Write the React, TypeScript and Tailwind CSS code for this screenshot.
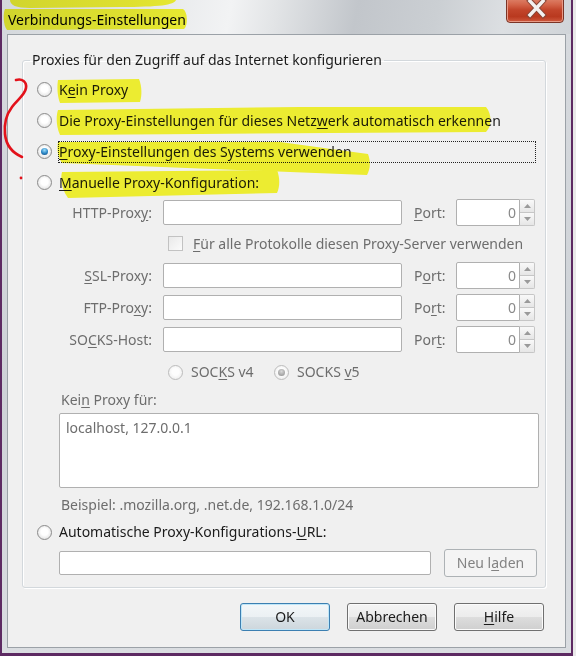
import React from "react";

type Opt = { checked?: boolean; disabled?: boolean };

function Radio({ checked = false, disabled = false }: Opt) {
  return (
    <span
      className={
        disabled
          ? "flex h-[15px] w-[15px] shrink-0 items-center justify-center rounded-full border border-[#bcbcbc] bg-[radial-gradient(circle_at_50%_45%,#fdfdfd_35%,#e6e6e6_100%)]"
          : "flex h-[15px] w-[15px] shrink-0 items-center justify-center rounded-full border border-[#8b8b8b] bg-[radial-gradient(circle_at_50%_45%,#ffffff_35%,#d4d4d4_100%)]"
      }
    >
      {checked && (
        <span
          className={
            disabled
              ? "h-[7px] w-[7px] rounded-full bg-[radial-gradient(circle_at_50%_35%,#d8d8d8_0%,#a9a9a9_60%,#8c8c8c_100%)]"
              : "h-[7px] w-[7px] rounded-full bg-[radial-gradient(circle_at_50%_30%,#9fe0fb_0%,#2b86c6_55%,#0d3f6e_100%)]"
          }
        />
      )}
    </span>
  );
}

function Key({ children }: { children: React.ReactNode }) {
  return <u className="underline decoration-1 underline-offset-[2px]">{children}</u>;
}

function Field({ w }: { w: string }) {
  return <div className={`h-[25px] rounded-[2px] border border-[#b0b0b0] bg-white ${w}`} />;
}

function Spinner() {
  return (
    <div className="-my-[1px] flex h-[27px] w-[79px]">
      <div className="flex flex-1 items-center justify-end rounded-l-[2px] border border-[#b0b0b0] bg-white pr-[3px] text-[#8a8a8a]">
        0
      </div>
      <div className="flex w-[15px] flex-col">
        <div className="flex flex-1 items-center justify-center rounded-tr-[2px] border border-l-0 border-[#c6c6c6] bg-[linear-gradient(to_bottom,#f9f9f9,#e6e6e6)]">
          <svg width="7" height="4" viewBox="0 0 7 4">
            <path d="M0 4 L3.5 0 L7 4 Z" fill="#9a9a9a" />
          </svg>
        </div>
        <div className="flex flex-1 items-center justify-center rounded-br-[2px] border border-l-0 border-t-0 border-[#c6c6c6] bg-[linear-gradient(to_bottom,#f9f9f9,#e6e6e6)]">
          <svg width="7" height="4" viewBox="0 0 7 4">
            <path d="M0 0 L3.5 4 L7 0 Z" fill="#9a9a9a" />
          </svg>
        </div>
      </div>
    </div>
  );
}

function ProxyRow({ label, port }: { label: React.ReactNode; port: React.ReactNode }) {
  return (
    <div className="flex h-[25px] items-center text-[#6d6d6d]">
      <div className="w-[129px] text-right">{label}</div>
      <div className="ml-[11px]">
        <Field w="w-[239px]" />
      </div>
      <div className="ml-[12px] w-[42px]">{port}</div>
      <Spinner />
    </div>
  );
}

function DlgButton({ children, def = false }: { children: React.ReactNode; def?: boolean }) {
  return (
    <div
      className={
        def
          ? "flex h-[28px] w-[90px] items-center justify-center rounded-[3px] border border-[#3c7fb1] bg-[linear-gradient(to_bottom,#f3f7f9_0%,#ebf0f3_50%,#dbe3e8_51%,#cdd6dc_100%)] shadow-[inset_0_0_0_1px_#bfe6f8]"
          : "flex h-[28px] w-[90px] items-center justify-center rounded-[3px] border border-[#707070] bg-[linear-gradient(to_bottom,#f4f4f4_0%,#ececec_50%,#dddddd_51%,#cfcfcf_100%)] shadow-[inset_0_0_0_1px_#fbfbfb]"
      }
    >
      {children}
    </div>
  );
}

export default function App() {
  return (
    <div className="relative h-[656px] w-[576px] overflow-hidden bg-[#e9e9e9] font-['Noto_Sans',sans-serif] text-[14px] leading-[20px] text-[#1b1b1b]">
      {/* window frame */}
      <div className="flex h-[656px] w-[573px] flex-col border-x-2 border-b-[3px] border-[#5d2a62] bg-[linear-gradient(180deg,#d7dade_0%,#ced2d7_60%,#dadde1_100%)]">
        {/* caption bar */}
        <div className="relative h-[34px] shrink-0 bg-[linear-gradient(100deg,#d4d8dc_0%,#e2e4e7_22%,#f2f3f4_40%,#e2e4e6_48%,#c2c6cb_62%,#cbcfd3_76%,#dcdfe2_88%,#d0d4d8_100%)]">
          <div className="pl-[6px] pt-[10px] text-black">Verbindungs-Einstellungen</div>
          <div className="absolute right-[7px] top-[-6px] h-[29px] w-[58px] rounded-b-[4px] border border-[#7b3426] bg-[linear-gradient(to_bottom,#e3937c_0%,#d4654a_35%,#c2452b_55%,#b9391f_80%,#cf5a3f_100%)] shadow-[inset_0_0_0_1px_#e89a86]">
            <svg className="absolute inset-0" width="58" height="29" viewBox="0 0 58 29">
              <path d="M23 6 L36 20 M36 6 L23 20" stroke="#874536" strokeWidth="5.5" strokeLinecap="square" />
              <path d="M23 6 L36 20 M36 6 L23 20" stroke="#f4f1f0" strokeWidth="3.4" strokeLinecap="square" />
            </svg>
          </div>
        </div>

        {/* client area */}
        <div className="mx-[5px] flex min-h-0 flex-1 flex-col border border-[#9ba1a7] bg-[#f0f0f0]">
          <fieldset className="ml-[14px] mt-[15px] w-[524px] rounded-[3px] border border-[#d3d8dc] pb-[10px] pt-[4px] shadow-[inset_1px_1px_0_#ffffff,1px_1px_0_#ffffff]">
            <legend className="ml-[7px] px-[2px]">Proxies für den Zugriff auf das Internet konfigurieren</legend>

            {/* proxy mode choices */}
            <div className="flex h-[31px] items-center pl-[14px]">
              <Radio />
              <span className="ml-[6px] border border-transparent px-0">
                K<Key>e</Key>in Proxy
              </span>
            </div>
            <div className="flex h-[31px] items-center pl-[14px]">
              <Radio />
              <span className="ml-[6px] border border-transparent">
                Die Proxy-Einstellungen für dieses Netz<Key>w</Key>erk automatisch erkennen
              </span>
            </div>
            <div className="flex h-[31px] items-center pl-[14px]">
              <Radio checked />
              <span className="ml-[6px] flex h-[22px] w-[478px] items-center border border-dotted border-[#222]">
                <Key>P</Key>roxy-Einstellungen des Systems verwenden
              </span>
            </div>
            <div className="flex h-[31px] items-center pl-[14px]">
              <Radio />
              <span className="ml-[6px] border border-transparent">
                <Key>M</Key>anuelle Proxy-Konfiguration:
              </span>
            </div>

            {/* manual configuration */}
            <div className="mt-[2px]">
              <ProxyRow
                label={<>HTTP-Prox<Key>y</Key>:</>}
                port={<><Key>P</Key>ort:</>}
              />
            </div>
            <div className="mt-[6px] flex h-[25px] items-center pl-[145px] text-[#6d6d6d]">
              <span className="h-[15px] w-[15px] shrink-0 border border-[#c2c2c2] bg-[linear-gradient(135deg,#e9e9e9,#fbfbfb)]" />
              <span className="ml-[10px]">
                <Key>F</Key>ür alle Protokolle diesen Proxy-Server verwenden
              </span>
            </div>
            <div className="mt-[7px]">
              <ProxyRow label={<><Key>S</Key>SL-Proxy:</>} port={<>P<Key>o</Key>rt:</>} />
            </div>
            <div className="mt-[7px]">
              <ProxyRow label={<>FTP-Pro<Key>x</Key>y:</>} port={<>Po<Key>r</Key>t:</>} />
            </div>
            <div className="mt-[7px]">
              <ProxyRow label={<>SO<Key>C</Key>KS-Host:</>} port={<>Por<Key>t</Key>:</>} />
            </div>

            <div className="mt-[8px] flex h-[24px] items-center pl-[145px] text-[#6d6d6d]">
              <Radio disabled />
              <span className="ml-[8px] w-[83px]">
                SOC<Key>K</Key>S v4
              </span>
              <Radio disabled checked />
              <span className="ml-[8px]">
                SOCKS <Key>v</Key>5
              </span>
            </div>

            <div className="mt-[6px] h-[20px] pl-[38px] text-[#6d6d6d]">
              Kei<Key>n</Key> Proxy für:
            </div>
            <div className="ml-[36px] mt-[3px] h-[75px] w-[480px] rounded-[2px] border border-[#b0b0b0] bg-white px-[6px] pt-[4px] text-[#6d6d6d]">
              localhost, 127.0.0.1
            </div>
            <div className="mt-[6px] h-[21px] pl-[38px] leading-[21px] text-[#6d6d6d]">
              Beispiel: .mozilla.org, .net.de, 192.168.1.0/24
            </div>

            <div className="mt-[5px] flex h-[24px] items-center pl-[14px]">
              <Radio />
              <span className="ml-[7px]">
                Automatische Proxy-Konfigurations-<Key>U</Key>RL:
              </span>
            </div>
            <div className="mt-[5px] flex h-[28px] items-center pl-[36px]">
              <div className="h-[24px] w-[372px] rounded-[2px] border border-[#b0b0b0] bg-white" />
              <div className="ml-[13px] flex h-[28px] w-[93px] items-center justify-center rounded-[3px] border border-[#adb2b5] bg-[#f4f4f4] text-[#838383]">
                Neu l<Key>a</Key>den
              </div>
            </div>
          </fieldset>

          <div className="mt-[15px] flex justify-end gap-[17px] pr-[21px]">
            <DlgButton def>OK</DlgButton>
            <DlgButton>Abbrechen</DlgButton>
            <DlgButton>
              <Key>H</Key>ilfe
            </DlgButton>
          </div>
        </div>
        <div className="h-[5px] shrink-0" />
      </div>

      {/* highlighter marks */}
      <svg
        className="pointer-events-none absolute left-0 top-0 mix-blend-multiply"
        width="576"
        height="656"
        viewBox="0 0 576 656"
      >
        <g fill="#fbfb34">
          <path d="M10 0 L176 0 C174 5 160 7 120 7 L30 8 C16 8 10 5 10 0 Z" />
          <path d="M5 9 L183 9 C188 12 188 26 184 29 L7 30 C3 25 3 13 5 9 Z" />
          <path d="M58 80 L139 79 C142 86 142 96 140 102 L60 103 C57 95 57 86 58 80 Z" />
          <path d="M58 110 L300 107 L486 107 C492 114 492 126 486 132 L200 134 L60 135 C56 126 56 116 58 110 Z" />
          <path d="M58 142 L280 142 L368 154 C371 162 370 170 367 175 L290 172 L62 163 C57 156 57 148 58 142 Z" />
          <path d="M62 172 L277 170 C280 178 280 186 277 193 L68 198 C62 190 60 180 62 172 Z" />
        </g>
      </svg>
      {/* pen marks */}
      <svg className="pointer-events-none absolute left-0 top-0" width="576" height="656" viewBox="0 0 576 656">
        <path
          d="M16 80 C22 78 27 82 26 88 C25 95 17 100 12 107 C6 115 4 125 5 134 C6 145 13 153 22 157"
          stroke="#e3121b"
          strokeWidth="2.6"
          fill="none"
          strokeLinecap="round"
        />
        <circle cx="21" cy="178" r="1.4" fill="#e3121b" />
      </svg>
    </div>
  );
}
